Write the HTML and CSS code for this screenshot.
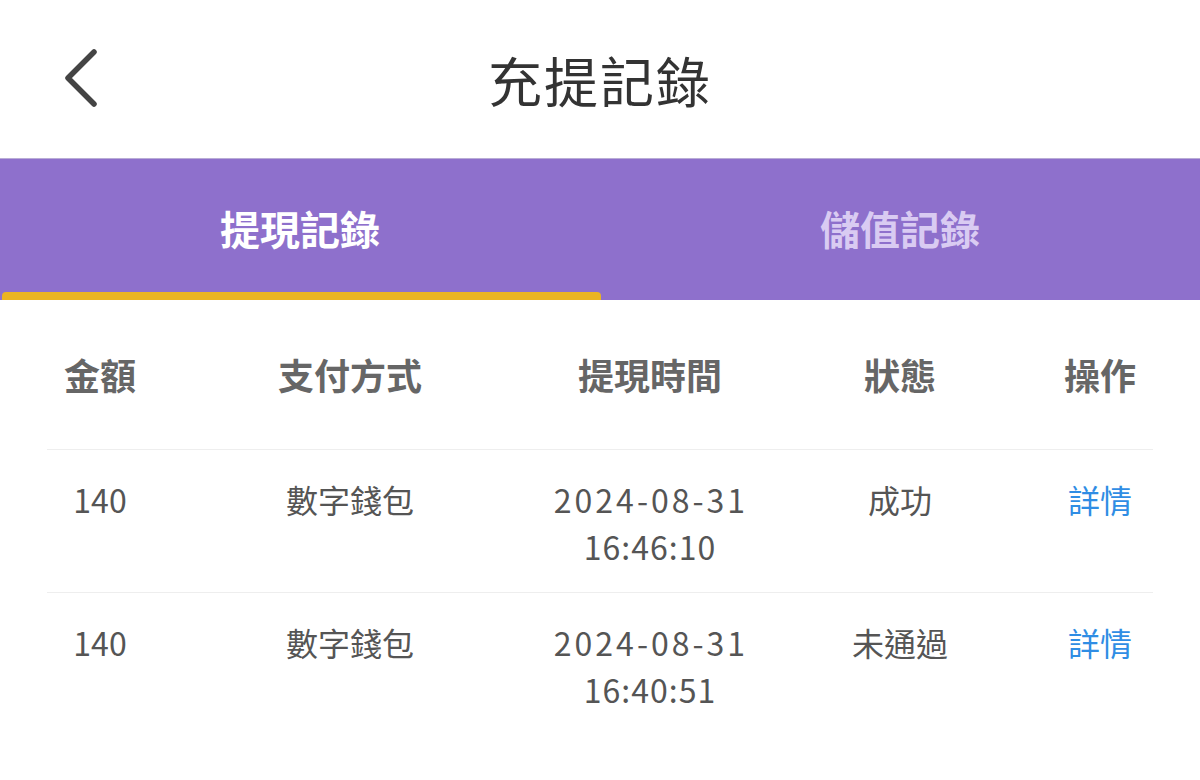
FILE: index.html
```html
<!DOCTYPE html>
<html lang="zh-Hant">
<head>
  <meta charset="UTF-8">
  <meta name="viewport" content="width=device-width, initial-scale=1.0">
  <title>充提記錄</title>
  <link rel="stylesheet" href="styles.css">
</head>
<body>
  <header class="topbar">
    <a class="back" href="#" aria-label="返回">
      <svg width="40" height="64" viewBox="0 0 40 64">
        <polyline points="32,5 6,31 32,57" fill="none" stroke="#444" stroke-width="5.5" stroke-linecap="round" stroke-linejoin="round"/>
      </svg>
    </a>
    <h1>充提記錄</h1>
  </header>

  <nav class="tabs">
    <div class="tab active">提現記錄</div>
    <div class="tab">儲值記錄</div>
  </nav>

  <div class="records">
    <div class="row head">
      <div>金額</div>
      <div>支付方式</div>
      <div>提現時間</div>
      <div>狀態</div>
      <div>操作</div>
    </div>
    <div class="row">
      <div>140</div>
      <div>數字錢包</div>
      <div class="time"><span class="date">2024-08-31</span><br>16:46:10</div>
      <div>成功</div>
      <div><a class="detail" href="#">詳情</a></div>
    </div>
    <div class="row">
      <div>140</div>
      <div>數字錢包</div>
      <div class="time"><span class="date">2024-08-31</span><br>16:40:51</div>
      <div>未通過</div>
      <div><a class="detail" href="#">詳情</a></div>
    </div>
  </div>
</body>
</html>
```

FILE: styles.css
```css
body {
  margin: 0;
  padding: 0;
  background-color: #fff;
  font-family: "Noto Sans CJK TC", "Noto Sans", sans-serif;
  color: #555;
}

.topbar {
  height: 158px;
  display: flex;
  align-items: center;
  justify-content: center;
  position: relative;
  border-bottom: 1px solid #b9acd6;
}

.topbar h1 {
  margin: 0;
  font-size: 54px;
  font-weight: 400;
  color: #333;
  letter-spacing: 2px;
}

.back {
  position: absolute;
  left: 62px;
  top: 47px;
  display: block;
}

.tabs {
  display: flex;
  height: 141px;
  background-color: #8e70cc;
}

.tab {
  flex: 1;
  display: flex;
  align-items: center;
  justify-content: center;
  padding-bottom: 4px;
  font-size: 40px;
  font-weight: 700;
  color: #d9cbf2;
  position: relative;
}

.tab.active {
  color: #fff;
}

.tab.active::after {
  content: "";
  position: absolute;
  left: 2px;
  right: -1px;
  bottom: 0;
  height: 8px;
  border-radius: 4px 4px 0 0;
  background-color: #ebb423;
}

.records {
  margin: 0 47px;
}

.row {
  display: grid;
  grid-template-columns: 106px 394px 206px 294px 106px;
  padding: 26px 0 22px;
  border-bottom: 1px solid #eeeeee;
  font-size: 32px;
  line-height: 47px;
  text-align: center;
}

.row.head {
  height: 150px;
  box-sizing: border-box;
  padding: 0;
  align-items: center;
  font-size: 36px;
  font-weight: 700;
  color: #666;
}

.row:last-child {
  border-bottom: none;
}

.time {
  white-space: nowrap;
  letter-spacing: 1px;
}

.date {
  letter-spacing: 3px;
  margin-right: -2px;
}

.detail {
  color: #2f8de4;
  text-decoration: none;
}
```
